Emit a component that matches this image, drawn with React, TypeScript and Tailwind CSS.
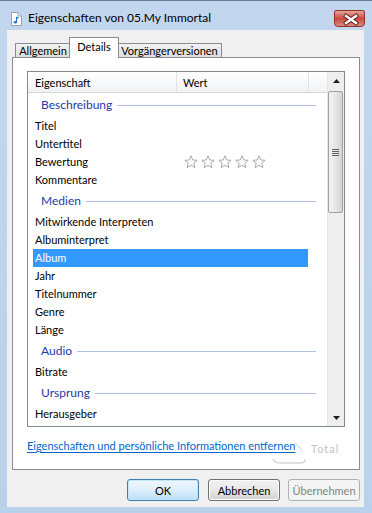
import React from "react";

type Row = { kind: "group" | "item"; label: string; selected?: boolean; stars?: boolean };

const rows: Row[] = [
  { kind: "group", label: "Beschreibung" },
  { kind: "item", label: "Titel" },
  { kind: "item", label: "Untertitel" },
  { kind: "item", label: "Bewertung", stars: true },
  { kind: "item", label: "Kommentare" },
  { kind: "group", label: "Medien" },
  { kind: "item", label: "Mitwirkende Interpreten" },
  { kind: "item", label: "Albuminterpret" },
  { kind: "item", label: "Album", selected: true },
  { kind: "item", label: "Jahr" },
  { kind: "item", label: "Titelnummer" },
  { kind: "item", label: "Genre" },
  { kind: "item", label: "Länge" },
  { kind: "group", label: "Audio" },
  { kind: "item", label: "Bitrate" },
  { kind: "group", label: "Ursprung" },
  { kind: "item", label: "Herausgeber" },
];

function Star() {
  return (
    <svg width="14" height="14" viewBox="0 0 14 14">
      <path
        d="M7 0.8 L8.75 5.0 L13.2 5.3 L9.8 8.2 L10.9 12.6 L7 10.3 L3.1 12.6 L4.2 8.2 L0.8 5.3 L5.25 5.0 Z"
        fill="#ffffff"
        stroke="#a9a9a9"
        strokeWidth="1"
        strokeLinejoin="round"
      />
    </svg>
  );
}

function FileIcon() {
  return (
    <svg width="11" height="14" viewBox="0 0 11 14">
      <path d="M0.5 0.5 H7 L10.5 4 V13.5 H0.5 Z" fill="#ffffff" stroke="#9aa3ad" />
      <path d="M7 0.5 V4 H10.5" fill="#e8ecf0" stroke="#9aa3ad" />
      <path d="M5.5 5 V10" stroke="#1f6fd0" strokeWidth="1.2" />
      <path d="M5.5 5 L7.5 6.2" stroke="#1f6fd0" strokeWidth="1.2" />
      <ellipse cx="4.3" cy="10.2" rx="1.6" ry="1.2" fill="#1f6fd0" />
    </svg>
  );
}

function CloseGlyph() {
  return (
    <svg width="31" height="17" viewBox="0 0 31 17">
      <path d="M11 5 L21 12 M21 5 L11 12" stroke="#5a1d17" strokeWidth="4.2" strokeLinecap="square" />
      <path d="M11 5 L21 12 M21 5 L11 12" stroke="#ffffff" strokeWidth="2.4" strokeLinecap="square" />
    </svg>
  );
}

function GroupRow({ label }: { label: string }) {
  return (
    <div className="h-[24px] flex items-center pl-[13px] pr-[11px]">
      <span className="text-[#1e3aa8] text-[12px] leading-none">{label}</span>
      <div className="flex-1 h-px bg-[#b3c2e0] ml-[5px]" />
    </div>
  );
}

function ItemRow({ row }: { row: Row }) {
  return (
    <div className="h-[18px] flex">
      <div
        className={
          "ml-[5px] w-[275px] h-[18px] flex items-center pl-[2px] " +
          (row.selected ? "bg-[#3399ff] text-white" : "text-black")
        }
      >
        <span className="w-[143px] shrink-0 text-[11px] leading-none pb-[1px]">{row.label}</span>
        {row.stars && (
          <div className="flex gap-[3px] ml-[6px]">
            <Star />
            <Star />
            <Star />
            <Star />
            <Star />
          </div>
        )}
      </div>
    </div>
  );
}

function Scrollbar() {
  return (
    <div className="w-[17px] bg-[#eeeeee] border-l border-[#e6e6e6] flex flex-col">
      <div className="h-[17px] flex items-center justify-center">
        <svg width="7" height="4" viewBox="0 0 7 4">
          <path d="M0 4 L3.5 0 L7 4 Z" fill="#202020" />
        </svg>
      </div>
      <div className="mr-[1px] mt-[2px] h-[122px] rounded-[2px] border border-[#a0a0a0] bg-gradient-to-r from-[#f3f3f3] via-[#e6e6e6] to-[#d4d4d4] flex items-center justify-center">
        <div className="flex flex-col gap-[1px]">
          <div className="w-[7px] h-px bg-[#606060]" />
          <div className="w-[7px] h-px bg-[#606060]" />
          <div className="w-[7px] h-px bg-[#606060]" />
          <div className="w-[7px] h-px bg-[#606060]" />
        </div>
      </div>
      <div className="flex-1" />
      <div className="h-[17px] flex items-center justify-center">
        <svg width="7" height="4" viewBox="0 0 7 4">
          <path d="M0 0 L7 0 L3.5 4 Z" fill="#202020" />
        </svg>
      </div>
    </div>
  );
}

function Button({ label, variant }: { label: string; variant: "default" | "normal" | "disabled" }) {
  const cls =
    variant === "default"
      ? "border-[#3c7fb1] bg-gradient-to-b from-[#eef7fd] via-[#dceffb] to-[#b9def5] text-black shadow-[inset_0_0_0_1px_#c4e5f6]"
      : variant === "normal"
      ? "border-[#707070] bg-gradient-to-b from-[#f2f2f2] via-[#e8e8e8] to-[#d2d2d2] text-black shadow-[inset_0_0_0_1px_#fbfbfb]"
      : "border-[#adb2b5] bg-[#f4f4f4] text-[#838383]";
  return (
    <div
      className={
        "w-[72px] h-[22px] rounded-[3px] border flex items-center justify-center text-[11px] leading-none " + cls
      }
    >
      {label}
    </div>
  );
}

export default function App() {
  return (
    <div className="w-[372px] h-[513px] flex flex-col bg-gradient-to-b from-[#c2d7ef] to-[#b9d1ea] border-t border-[#6b7f98] [font-family:Lato,'Liberation_Sans',sans-serif] overflow-hidden">
      {/* Title bar */}
      <div className="h-[29px] flex items-start relative">
        <div className="ml-[11px] mt-[11px]">
          <FileIcon />
        </div>
        <span className="ml-[6px] mt-[9px] text-[12px] leading-[16px] text-black">
          Eigenschaften von 05.My Immortal
        </span>
        <div className="ml-auto mr-[7px] mt-[9px] w-[31px] h-[17px] rounded-b-[4px] rounded-t-[2px] border border-[#8e3229] bg-gradient-to-b from-[#e7a49a] via-[#c9493e] to-[#d8877c]">
          <CloseGlyph />
        </div>
      </div>

      {/* Client area */}
      <div className="ml-[7px] w-[357px] h-[477px] bg-[#f0f0f0] flex flex-col">
        {/* Tabs */}
        <div className="h-[21px] mt-[7px] -mb-px flex items-end pl-[8px] relative z-10">
          <div className="w-[56px] h-[14px] mb-px border border-b-0 border-[#898c95] bg-gradient-to-b from-[#f2f2f2] to-[#dddddd] flex items-center justify-center text-[11px] leading-none">
            Allgemein
          </div>
          <div className="-ml-[2px] w-[50px] h-[21px] border border-b-0 border-[#898c95] bg-white flex items-center justify-center pb-[4px] text-[11px] leading-none relative z-10">
            Details
          </div>
          <div className="-ml-[2px] w-[105px] h-[14px] mb-px border border-b-0 border-[#898c95] bg-gradient-to-b from-[#f2f2f2] to-[#dddddd] flex items-center justify-center text-[11px] leading-none">
            Vorgängerversionen
          </div>
        </div>

        {/* Tab panel */}
        <div className="ml-[5px] w-[348px] h-[413px] border border-[#898c95] bg-white flex flex-col px-[14px] pt-[13px] relative">
          {/* List view */}
          <div className="h-[356px] border border-[#828790] flex">
            <div className="flex-1 flex flex-col">
              <div className="h-[21px] flex border-b border-[#d5d5d5] bg-gradient-to-b from-white to-[#f1f2f4] text-[11px] leading-none">
                <div className="w-[149px] border-r border-[#dfe2e8] flex items-center pl-[7px]">Eigenschaft</div>
                <div className="w-[132px] border-r border-[#dfe2e8] flex items-center pl-[6px]">Wert</div>
                <div className="flex-1" />
              </div>
              <div className="flex-1 flex flex-col">
                {rows.map((r) =>
                  r.kind === "group" ? <GroupRow key={r.label} label={r.label} /> : <ItemRow key={r.label} row={r} />
                )}
              </div>
            </div>
            <Scrollbar />
          </div>

          <div className="mt-[10px] h-[16px] flex items-center">
            <span className="text-[11px] leading-none text-[#0066cc] underline underline-offset-2">
              Eigenschaften und persönliche Informationen entfernen
            </span>
          </div>

          {/* faint watermark */}
          <div className="absolute left-[258px] top-[379px] w-[80px] h-[30px] pointer-events-none">
            <span className="absolute left-[40px] top-[4px] text-[11px] tracking-[1px] text-[#c4c4c4]">Total</span>
            <svg className="absolute left-0 top-0" width="40" height="30" viewBox="0 0 40 30">
              <path d="M2 22 Q3 26 10 26 L30 26 Q34 26 34 22" fill="none" stroke="#d8d8d8" strokeWidth="1.5" />
              <path d="M24 6 L31 13" stroke="#d0d0d0" strokeWidth="1" />
            </svg>
          </div>
        </div>

        {/* Buttons */}
        <div className="mt-[9px] flex justify-end pr-[4px]">
          <Button label="OK" variant="default" />
          <div className="w-[9px]" />
          <Button label="Abbrechen" variant="normal" />
          <div className="w-[8px]" />
          <Button label="Übernehmen" variant="disabled" />
        </div>
      </div>
    </div>
  );
}
